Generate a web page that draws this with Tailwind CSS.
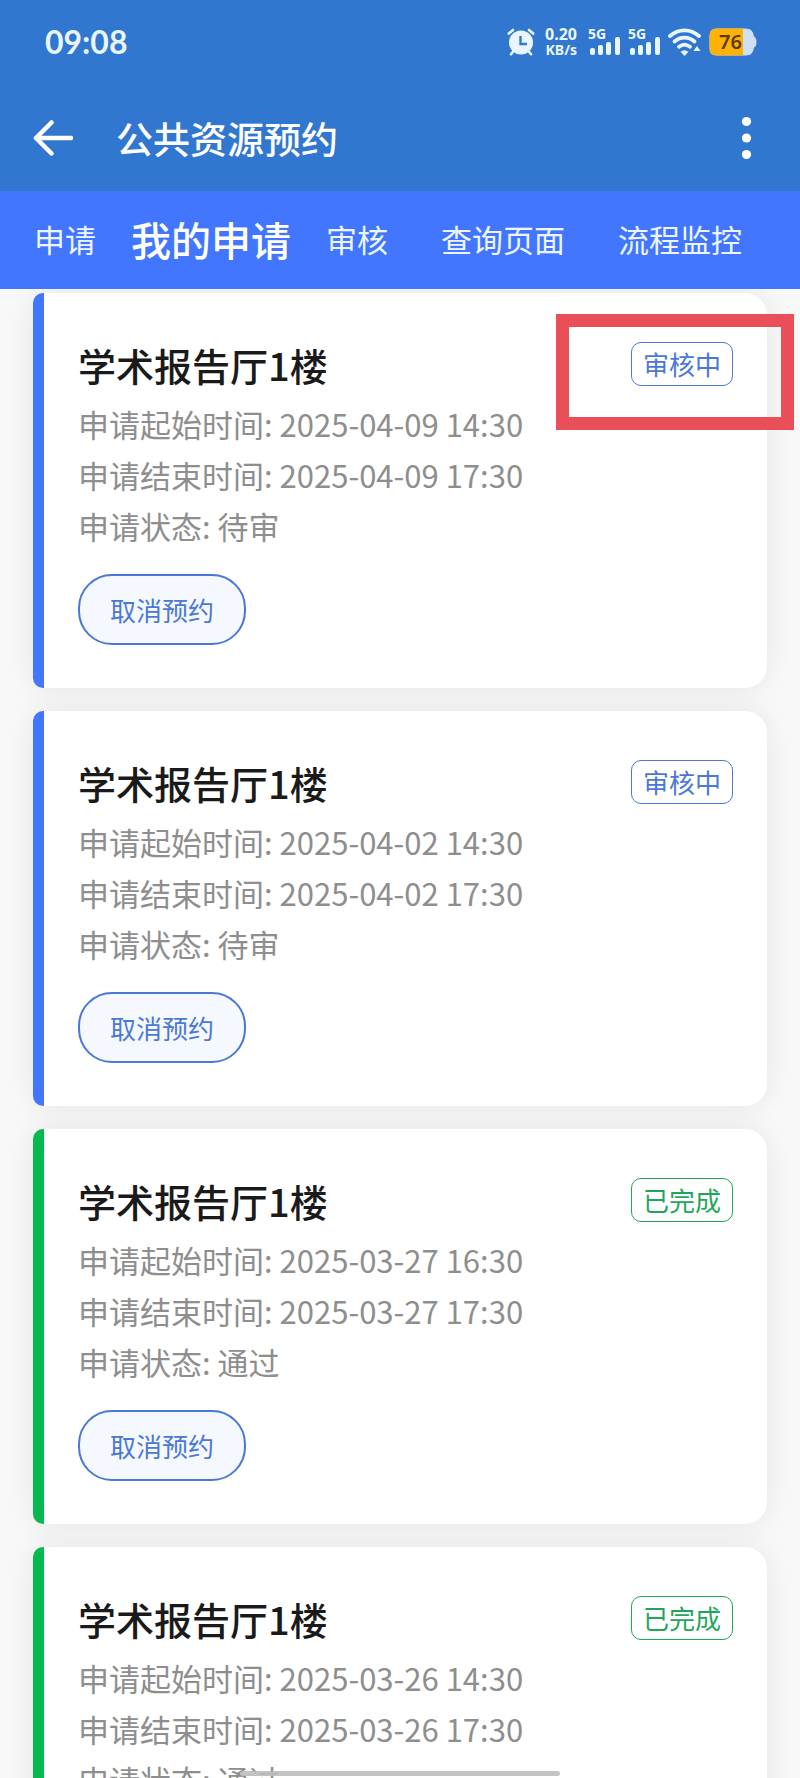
<!DOCTYPE html>
<html lang="zh-CN">
<head>
<meta charset="utf-8">
<meta name="viewport" content="width=device-width, initial-scale=1">
<title>公共资源预约</title>
<script src="https://cdn.jsdelivr.net/npm/@tailwindcss/browser@4"></script>
</head>
<body class="flex h-screen flex-col overflow-hidden bg-[#f8f8f8] font-['Noto_Sans_CJK_SC',sans-serif]">

<header class="shrink-0 bg-[#3177d0] text-white">
  <!-- status bar -->
  <div class="flex h-[84px] items-center justify-between pr-[43px] pl-[45px] text-[#e9f6ff]">
    <time class="font-['Lato',sans-serif] text-[32px] font-bold">09:08</time>
    <div class="flex items-center gap-2">
      <svg class="h-7 w-7" viewBox="0 0 28 28" role="img" aria-label="闹钟">
        <g stroke="currentColor" stroke-width="2.6" stroke-linecap="round" fill="none">
          <path d="M1.8 5.6 6 2M26.2 5.6 22 2M6.5 23 4 26.2M21.500 23l2.500 3.200"/>
        </g>
        <circle cx="14" cy="14.500" r="12" fill="currentColor"/>
        <path d="M13.500 8v8h6.500" fill="none" stroke="#3177d0" stroke-width="2.400"/>
      </svg>
      <div class="flex w-[34px] flex-col items-end font-['Noto_Sans',sans-serif] text-[16px] leading-4 font-bold">
        <span>0.20</span><span class="text-[14px]">KB/s</span>
      </div>
      <div class="relative ml-[3px] h-7 w-8">
        <span class="absolute top-0 left-0 font-['Noto_Sans',sans-serif] text-[14px] leading-3 font-bold">5G</span>
        <svg class="h-7 w-8" viewBox="0 0 32 28" fill="currentColor" aria-hidden="true"><rect x="2" y="20" width="5" height="7" rx="2"/><rect x="10" y="17" width="5" height="10" rx="2"/><rect x="18" y="14" width="5" height="13" rx="2"/><rect x="27" y="9" width="5" height="18" rx="2"/></svg>
      </div>
      <div class="relative h-7 w-8">
        <span class="absolute top-0 left-0 font-['Noto_Sans',sans-serif] text-[14px] leading-3 font-bold">5G</span>
        <svg class="h-7 w-8" viewBox="0 0 32 28" fill="currentColor" aria-hidden="true"><rect x="2" y="20" width="5" height="7" rx="2"/><rect x="10" y="17" width="5" height="10" rx="2"/><rect x="18" y="14" width="5" height="13" rx="2"/><rect x="27" y="9" width="5" height="18" rx="2"/></svg>
      </div>
      <svg class="h-7 w-[33px]" viewBox="0 0 33 28" role="img" aria-label="无线网络">
        <g fill="none" stroke="currentColor" stroke-width="3.800" stroke-linecap="round"><path d="M2 8c8.500-7.500 20.500-7.500 29 0"/><path d="M6.500 13.500c6-5.200 14-5.200 20 0"/><path d="M11 18.800c3.500-2.800 7.500-2.800 11 0"/></g>
        <path d="M12.500 23.800q4-3 8 0L16.500 28z" fill="currentColor"/><path d="M25.500 23 29 18l3.500 5z" fill="currentColor"/>
      </svg>
      <div class="relative h-7 w-12">
        <svg class="h-7 w-12" viewBox="0 0 48 28" aria-hidden="true"><path d="M8 0.500h29q7 0 8 8 2.500 1 2.500 5.500t-2.500 5.500q-1 8-8 8H8q-7.500 0-7.500-7V7.500q0-7 7.500-7z" fill="#cddff5"/><path d="M8 0.500h26v27H8q-7.500 0-7.500-7V7.500q0-7 7.500-7z" fill="#fdb205"/></svg>
        <span class="absolute inset-y-0 left-[10px] font-['Noto_Sans',sans-serif] text-[20px] leading-7 font-semibold text-[#5a3c08]">76</span>
      </div>
    </div>
  </div>
  <!-- title bar -->
  <div class="flex h-[107px] items-center pr-[42px] pl-[33px]">
    <button type="button" aria-label="返回" class="mr-[43px] shrink-0">
      <svg class="h-10 w-10" viewBox="0 0 40 40" fill="none" stroke="currentColor" stroke-width="4.500" stroke-linecap="round" stroke-linejoin="round"><path d="M38 20H3M18.500 4.500 3 20l15.500 15.500"/></svg>
    </button>
    <h1 class="text-[37px] leading-[48px] font-medium">公共资源预约</h1>
    <button type="button" aria-label="更多" class="ml-auto">
      <svg class="h-11 w-[23px]" viewBox="0 0 23 44" fill="currentColor"><circle cx="11.500" cy="5.500" r="4.600"/><circle cx="11.500" cy="22" r="4.600"/><circle cx="11.500" cy="38.500" r="4.600"/></svg>
    </button>
  </div>
</header>

<nav class="flex h-[98px] shrink-0 items-center gap-[53px] bg-[#4276ff] pb-0.5 pl-[34px] text-[31px] whitespace-nowrap text-[#edf6ff]">
  <div class="flex items-center gap-[35px]">
    <a href="#">申请</a>
    <a href="#" aria-current="page" class="text-[40px] font-medium text-white">我的申请</a>
    <a href="#">审核</a>
  </div>
  <a href="#">查询页面</a>
  <a href="#">流程监控</a>
</nav>

<main class="min-h-0 flex-1 overflow-hidden px-[33px] pt-1">
  <ul class="flex flex-col gap-[23px] text-[31px] leading-[51px] text-[#8e8e8e]">
    <li class="relative rounded-l-[10px] rounded-r-[22px] border-l-[11px] border-[#4276ff] bg-white pt-[49px] pr-[34px] pb-[43px] pl-[34px] shadow-[0_0_30px_rgba(0,0,0,0.08)]">
      <div class="flex items-start justify-between">
        <h2 class="text-[38px] leading-[46px] font-medium text-[#1a1a1a]">学术报告厅1楼</h2>
        <span class="rounded-[10px] border border-[#4a78d6] px-[11px] text-[26px] leading-[42px] text-[#4a78d6]">审核中</span>
      </div>
      <p class="mt-[10px]">申请起始时间: 2025-04-09 14:30</p>
      <p>申请结束时间: 2025-04-09 17:30</p>
      <p>申请状态: 待审</p>
      <button type="button" class="mt-[23px] block h-[71px] rounded-[34px] border-2 border-[#4a78d6] bg-[#f5f8ff] px-[30px] text-[26px] leading-none text-[#4a78d6]">取消预约</button>
      <div class="absolute top-[21px] -right-[27px] h-[116px] w-[238px] border-[13px] border-[#ea4f59]"></div>
    </li>
    <li class="rounded-l-[10px] rounded-r-[22px] border-l-[11px] border-[#4276ff] bg-white pt-[49px] pr-[34px] pb-[43px] pl-[34px] shadow-[0_0_30px_rgba(0,0,0,0.08)]">
      <div class="flex items-start justify-between">
        <h2 class="text-[38px] leading-[46px] font-medium text-[#1a1a1a]">学术报告厅1楼</h2>
        <span class="rounded-[10px] border border-[#4a78d6] px-[11px] text-[26px] leading-[42px] text-[#4a78d6]">审核中</span>
      </div>
      <p class="mt-[10px]">申请起始时间: 2025-04-02 14:30</p>
      <p>申请结束时间: 2025-04-02 17:30</p>
      <p>申请状态: 待审</p>
      <button type="button" class="mt-[23px] block h-[71px] rounded-[34px] border-2 border-[#4a78d6] bg-[#f5f8ff] px-[30px] text-[26px] leading-none text-[#4a78d6]">取消预约</button>
    </li>
    <li class="rounded-l-[10px] rounded-r-[22px] border-l-[11px] border-[#05b84f] bg-white pt-[49px] pr-[34px] pb-[43px] pl-[34px] shadow-[0_0_30px_rgba(0,0,0,0.08)]">
      <div class="flex items-start justify-between">
        <h2 class="text-[38px] leading-[46px] font-medium text-[#1a1a1a]">学术报告厅1楼</h2>
        <span class="rounded-[10px] border border-[#1fa65a] px-[11px] text-[26px] leading-[42px] text-[#1fa65a]">已完成</span>
      </div>
      <p class="mt-[10px]">申请起始时间: 2025-03-27 16:30</p>
      <p>申请结束时间: 2025-03-27 17:30</p>
      <p>申请状态: 通过</p>
      <button type="button" class="mt-[23px] block h-[71px] rounded-[34px] border-2 border-[#4a78d6] bg-[#f5f8ff] px-[30px] text-[26px] leading-none text-[#4a78d6]">取消预约</button>
    </li>
    <li class="rounded-l-[10px] rounded-r-[22px] border-l-[11px] border-[#05b84f] bg-white pt-[49px] pr-[34px] pb-[43px] pl-[34px] shadow-[0_0_30px_rgba(0,0,0,0.08)]">
      <div class="flex items-start justify-between">
        <h2 class="text-[38px] leading-[46px] font-medium text-[#1a1a1a]">学术报告厅1楼</h2>
        <span class="rounded-[10px] border border-[#1fa65a] px-[11px] text-[26px] leading-[42px] text-[#1fa65a]">已完成</span>
      </div>
      <p class="mt-[10px]">申请起始时间: 2025-03-26 14:30</p>
      <p>申请结束时间: 2025-03-26 17:30</p>
      <p>申请状态: 通过</p>
    </li>
  </ul>
</main>

<!-- home indicator -->
<div class="fixed bottom-0.5 left-1/2 h-[5px] w-2/5 -translate-x-1/2 rounded-full bg-[#bdbdbd]/90"></div>
</body>
</html>
